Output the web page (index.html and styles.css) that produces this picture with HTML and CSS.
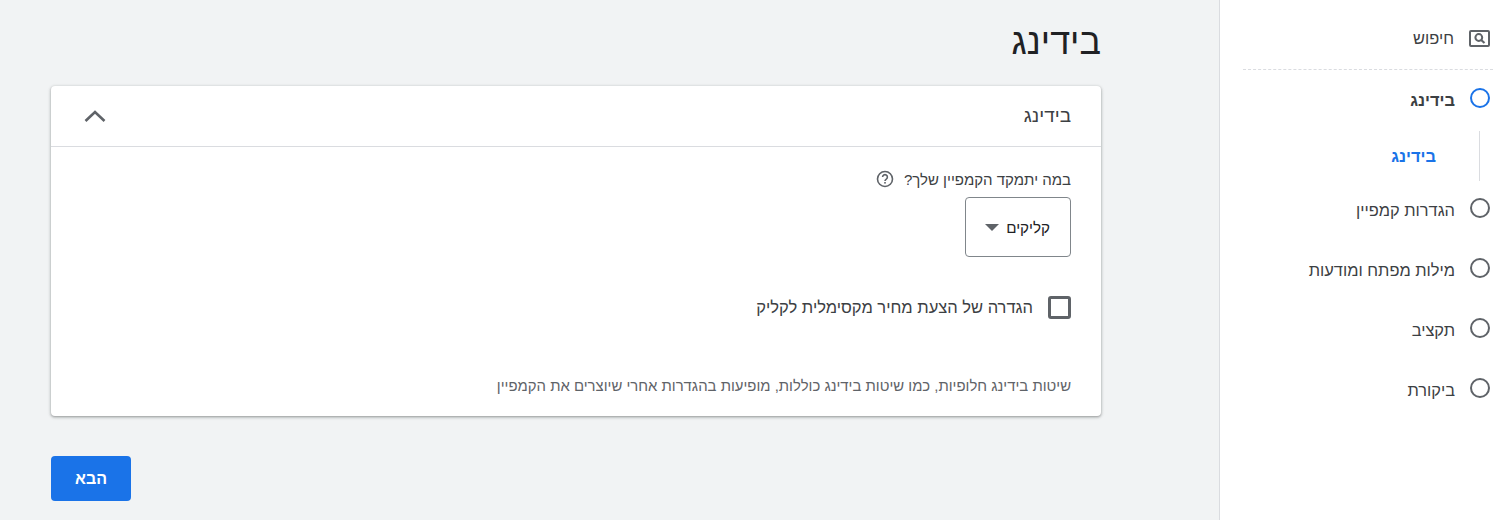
FILE: index.html
```html
<!DOCTYPE html>
<html lang="he" dir="rtl">
<head>
    <meta charset="UTF-8">
    <meta name="viewport" content="width=device-width, initial-scale=1.0">
    <title>בידינג</title>
    <link rel="stylesheet" href="styles.css">
</head>
<body>
    <nav class="sidebar">
        <div class="step step-search">
            <svg class="search-icon" width="21" height="17" viewBox="0 0 21 17">
                <rect x="1" y="1" width="19" height="15" rx="1" fill="none" stroke="#5f6368" stroke-width="2"/>
                <circle cx="9.8" cy="7.5" r="3.4" fill="none" stroke="#5f6368" stroke-width="2"/>
                <path d="M12.2 10L15.5 13" stroke="#5f6368" stroke-width="2.2" fill="none"/>
            </svg>
            <span>חיפוש</span>
        </div>
        <div class="divider"></div>
        <div class="step step-active">
            <span class="dot"></span>
            <span class="step-label">בידינג</span>
        </div>
        <div class="substeps">
            <span>בידינג</span>
        </div>
        <div class="step">
            <span class="dot"></span>
            <span class="step-label">הגדרות קמפיין</span>
        </div>
        <div class="step">
            <span class="dot"></span>
            <span class="step-label">מילות מפתח ומודעות</span>
        </div>
        <div class="step">
            <span class="dot"></span>
            <span class="step-label">תקציב</span>
        </div>
        <div class="step">
            <span class="dot"></span>
            <span class="step-label">ביקורת</span>
        </div>
    </nav>

    <main class="main">
        <h1 class="title">בידינג</h1>
        <section class="card">
            <div class="card-header">
                <span>בידינג</span>
                <svg width="24" height="14" viewBox="0 0 24 14">
                    <path d="M2.5 12L12 3l9.5 9" fill="none" stroke="#5f6368" stroke-width="2.6"/>
                </svg>
            </div>
            <div class="card-body">
                <div class="question">
                    <span>במה יתמקד הקמפיין שלך?</span>
                    <svg width="18" height="18" viewBox="0 0 18 18">
                        <circle cx="9" cy="9" r="7.5" fill="none" stroke="#5f6368" stroke-width="1.6"/>
                        <path d="M6.6 7.1a2.4 2.4 0 1 1 3.7 2c-.9.6-1.3 1-1.3 2" fill="none" stroke="#5f6368" stroke-width="1.6"/>
                        <rect x="8.2" y="12" width="1.6" height="1.6" fill="#5f6368"/>
                    </svg>
                </div>
                <div class="select">
                    <span>קליקים</span>
                    <span class="arrow"></span>
                </div>
                <label class="check">
                    <span class="box"></span>
                    <span>הגדרה של הצעת מחיר מקסימלית לקליק</span>
                </label>
                <p class="note">שיטות בידינג חלופיות, כמו שיטות בידינג כוללות, מופיעות בהגדרות אחרי שיוצרים את הקמפיין</p>
            </div>
        </section>
        <button class="next">הבא</button>
    </main>
</body>
</html>
```

FILE: styles.css
```css
* { box-sizing: border-box; }
html, body { height: 100%; }
body { margin: 0; display: flex; height: 520px; overflow: hidden; background: #f1f3f4; font-family: "Liberation Sans", Arial, sans-serif; color: #3c4043; }

.sidebar { width: 286px; flex: none; background: white; border-left: 1px solid #dadce0; padding: 7px 0 0 0; font-size: 16.4px; }
.step { display: flex; align-items: center; gap: 15px; height: 60px; padding-right: 15px; }
.step-label { padding-top: 5px; }
.step-search { height: 61px; padding-top: 1px; }
.search-icon { flex: none; }
.dot { width: 20px; height: 20px; border: 2px solid #5f6368; border-radius: 50%; flex: none; }
.step-active { font-weight: bold; margin-top: -2px; }
.step-active .dot { border-color: #1a73e8; }
.divider { border-top: 1px dashed #dadce0; margin: 1px 12px 0 23px; }
.substeps { height: 50px; margin: 3px 25px 0 0; border-right: 1px solid #dadce0; padding-right: 43px; display: flex; align-items: center; font-weight: bold; font-size: 16.4px; color: #1a73e8; }
.substeps + .step { margin-top: -3px; }

.main { flex: 1; padding: 0 118px 0 51px; }
.title { margin: 0; height: 86px; padding-top: 20px; font-size: 36px; font-weight: normal; line-height: 44px; color: #202124; }

.card { width: 1050px; height: 330px; background: white; border-radius: 4px; box-shadow: 0 1px 3px 1px rgba(60, 64, 67, 0.2), 0 1px 2px rgba(60, 64, 67, 0.3); }
.card-header { height: 61px; border-bottom: 1px solid #dadce0; padding: 0 30px 0 32px; display: flex; align-items: center; justify-content: space-between; font-size: 19px; }
.card-body { padding: 23px 30px 0 30px; }
.question { display: flex; align-items: center; gap: 10px; font-size: 15px; height: 18px; }
.select { width: 106px; height: 60px; margin-top: 9px; border: 1px solid #80868b; border-radius: 4px; display: flex; align-items: center; gap: 7px; padding-right: 20px; font-size: 15.2px; color: #202124; }
.arrow { width: 0; height: 0; border-left: 7px solid transparent; border-right: 7px solid transparent; border-top: 7px solid #5f6368; }
.check { display: flex; align-items: center; gap: 15px; margin-top: 39px; font-size: 16.5px; }
.box { width: 23px; height: 23px; border: 3px solid #5f6368; border-radius: 3px; flex: none; }
.note { margin: 58px 0 0 0; font-size: 14.9px; line-height: 18px; color: #5f6368; }

.next { display: block; width: 80px; height: 45px; margin: 40px auto 0 0; border: none; border-radius: 4px; background: #1a73e8; color: white; font-family: inherit; font-size: 16px; font-weight: bold; }
```
